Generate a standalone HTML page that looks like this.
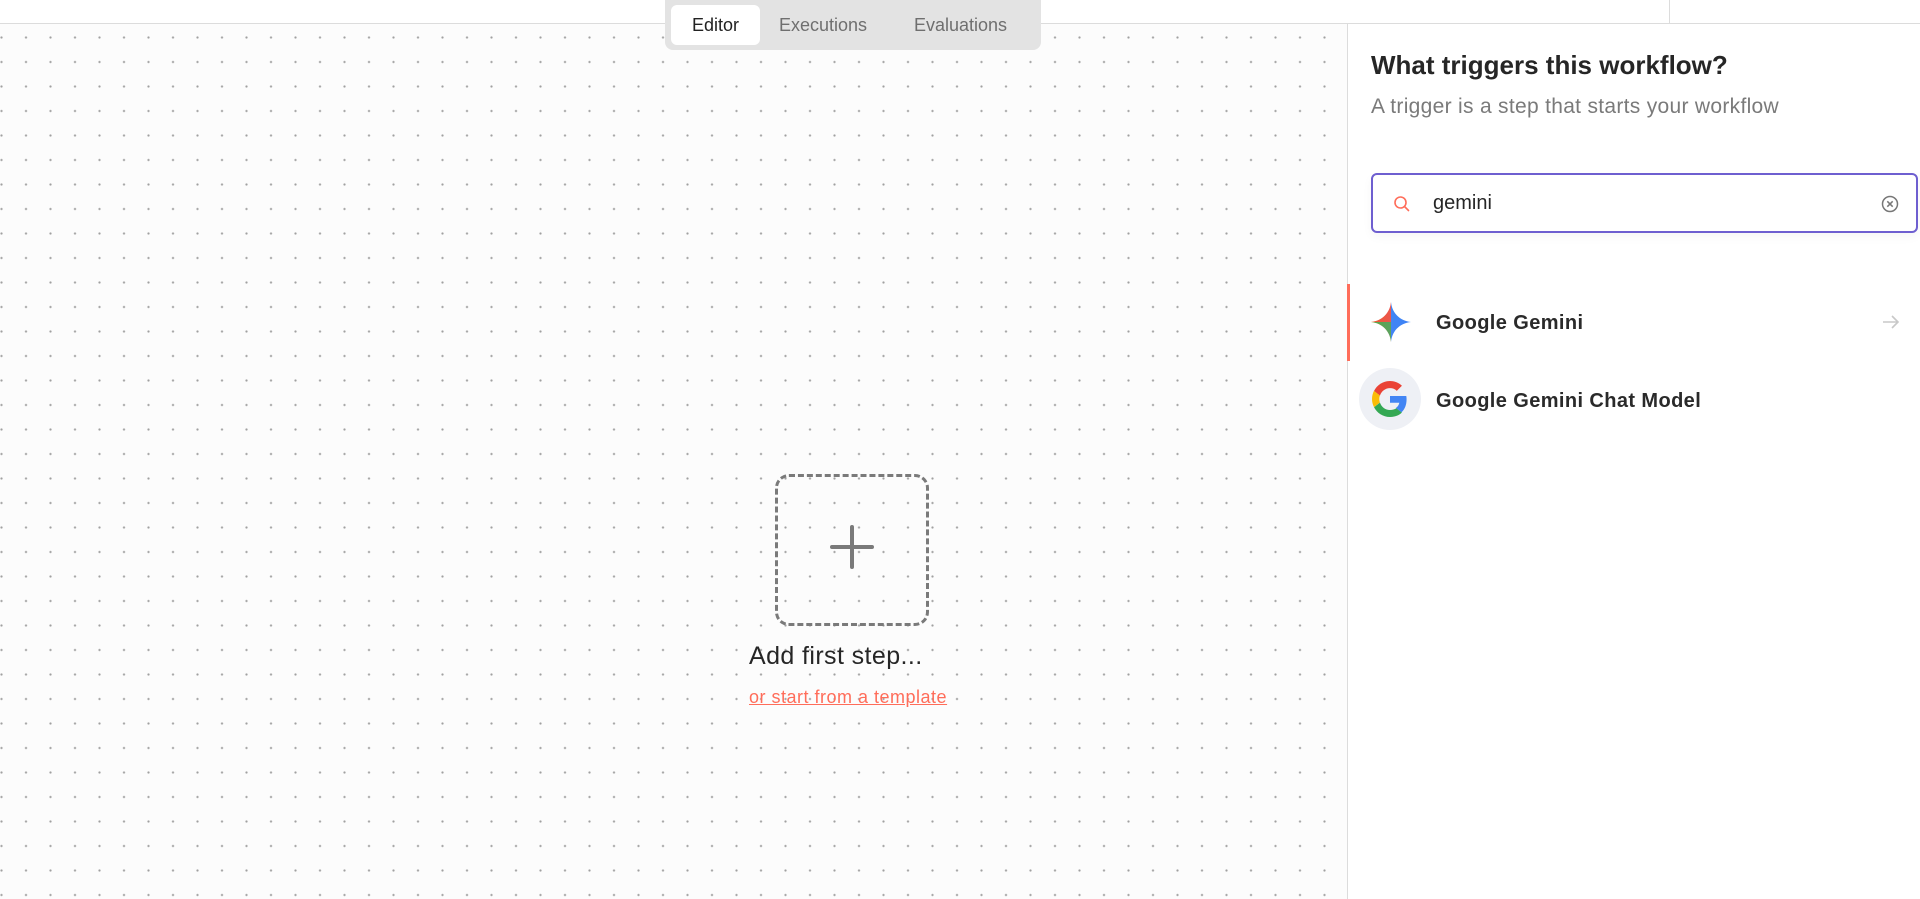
<!DOCTYPE html>
<html><head><meta charset="utf-8"><style>
*{box-sizing:border-box;margin:0;padding:0}
body{width:1920px;height:899px;overflow:hidden;font-family:"Liberation Sans",sans-serif;background:#fff;position:relative}
.top{position:absolute;left:0;top:0;width:1920px;height:24px;background:#fff;border-bottom:1px solid #dcdcdc}
.vline{position:absolute;left:1669px;top:0;width:1px;height:23px;background:#dcdcdc}
.canvas{position:absolute;left:0;top:24px;width:1347px;height:875px;background-color:#fcfcfc;
background-image:radial-gradient(circle,#a0a0a0 0.9px,transparent 1.3px);background-size:24.5px 24.5px;background-position:-10.75px -23.25px}
.tabs{position:absolute;left:665px;top:0;width:376px;height:50px;background:#e3e3e3;border-radius:0 0 8px 8px}
.tab{position:absolute;top:5px;height:40px;line-height:40px;font-size:18px;color:#6f6f6f}
.tab.on{background:#fff;color:#222;border-radius:6px;text-align:center}
.side{position:absolute;left:1347px;top:24px;width:573px;height:875px;background:#fff;border-left:1px solid #dcdcdc}
.t1{position:absolute;left:1371px;top:50px;font-size:26px;font-weight:bold;color:#262626}
.t2{position:absolute;left:1371px;top:95px;font-size:21px;color:#7a7a7a;letter-spacing:0.3px}
.search{position:absolute;left:1371px;top:173px;width:547px;height:60px;border:2px solid #6e5fd0;border-radius:6px;box-shadow:0 4px 10px rgba(0,0,0,.04)}
.search .q{position:absolute;left:60px;top:17px;font-size:20px;color:#262626}
.item{position:absolute;left:1436px;font-size:20px;font-weight:bold;color:#2a2a2a;letter-spacing:0.4px}
.bar{position:absolute;left:1347px;top:284px;width:3px;height:77px;background:#ff6d5a}
.box{position:absolute;left:775px;top:474px;width:154px;height:152px;border:3px dashed #7a7a7a;border-radius:14px}
.add{position:absolute;left:749px;top:642px;font-size:25px;color:#262626;letter-spacing:0.4px}
.link{position:absolute;left:749px;top:687px;font-size:18px;color:#ff6d5a;text-decoration:underline;letter-spacing:0.5px}
</style></head><body>
<div class="canvas"></div>
<div class="top"></div><div class="vline"></div>
<div class="tabs">
<div class="tab on" style="left:6px;width:89px">Editor</div>
<div class="tab" style="left:114px">Executions</div>
<div class="tab" style="left:249px">Evaluations</div>
</div>
<div class="box"></div>
<svg style="position:absolute;left:830px;top:525px" width="44" height="44"><path d="M22 2v40M2 22h40" stroke="#7a7a7a" stroke-width="4" stroke-linecap="round"/></svg>
<div class="add">Add first step...</div>
<div class="link">or start from a template</div>
<div class="side"></div>
<div class="t1">What triggers this workflow?</div>
<div class="t2">A trigger is a step that starts your workflow</div>
<div class="search">
<svg style="position:absolute;left:20px;top:20px" width="18" height="18"><circle cx="7.5" cy="7.5" r="5.5" fill="none" stroke="#ff6d5a" stroke-width="1.6"/><path d="M11.5 11.5l4 4" stroke="#ff6d5a" stroke-width="1.6" stroke-linecap="round"/></svg>
<div class="q">gemini</div>
<svg style="position:absolute;left:508px;top:20px" width="18" height="18"><circle cx="9" cy="9" r="7.5" fill="none" stroke="#777" stroke-width="1.5"/><path d="M6.3 6.3l5.4 5.4M11.7 6.3l-5.4 5.4" stroke="#777" stroke-width="1.5"/></svg>
</div>
<div class="bar"></div>
<svg style="position:absolute;left:1370px;top:301px" width="42" height="42" viewBox="0 0 42 42"><defs><linearGradient id="g2" x1="0" y1="0" x2="1" y2="0"><stop offset="0" stop-color="#f5a623"/><stop offset=".5" stop-color="#e94b4b" stop-opacity=".6"/><stop offset=".5" stop-color="#4285f4"/><stop offset="1" stop-color="#3b82f6"/></linearGradient></defs><path d="M21 1C22 12 30 20 41 21C30 22 22 30 21 41C20 30 12 22 1 21C12 20 20 12 21 1Z" fill="url(#g2)"/><path d="M21 21L21 41C20 30 12 22 1 21Z" fill="#34a853" opacity=".8"/><path d="M21 1C20 12 12 20 1 21L21 21Z" fill="#ea4335" opacity=".75"/></svg>
<div class="item" style="top:312px">Google Gemini</div>
<svg style="position:absolute;left:1881px;top:313px" width="20" height="18"><path d="M2 9h15M11 3l6 6-6 6" fill="none" stroke="#c8c8c8" stroke-width="1.6"/></svg>
<div style="position:absolute;left:1359px;top:368px;width:62px;height:62px;border-radius:50%;background:#eef0f5"></div>
<svg style="position:absolute;left:1372px;top:381px" width="36" height="36" viewBox="0 0 48 48"><path fill="#EA4335" d="M24 9.5c3.5 0 6.6 1.2 9.1 3.6l6.8-6.8C35.8 2.4 30.3 0 24 0 14.6 0 6.6 5.4 2.7 13.3l7.9 6.2C12.5 13.6 17.8 9.5 24 9.5z"/><path fill="#4285F4" d="M46.1 24.5c0-1.6-.1-3.1-.4-4.5H24v9h12.4c-.5 2.9-2.2 5.3-4.6 7l7.5 5.8c4.3-4 6.8-9.9 6.8-17.3z"/><path fill="#FBBC05" d="M10.5 28.6c-.5-1.4-.8-3-.8-4.6s.3-3.2.8-4.6l-7.9-6.2C1 16.5 0 20.1 0 24s1 7.5 2.7 10.8l7.8-6.2z"/><path fill="#34A853" d="M24 48c6.5 0 11.9-2.1 15.9-5.8l-7.5-5.8c-2.1 1.4-4.9 2.3-8.4 2.3-6.2 0-11.5-4.2-13.4-9.9l-7.9 6.2C6.6 42.6 14.6 48 24 48z"/></svg>
<div class="item" style="top:390px">Google Gemini Chat Model</div>
</body></html>
